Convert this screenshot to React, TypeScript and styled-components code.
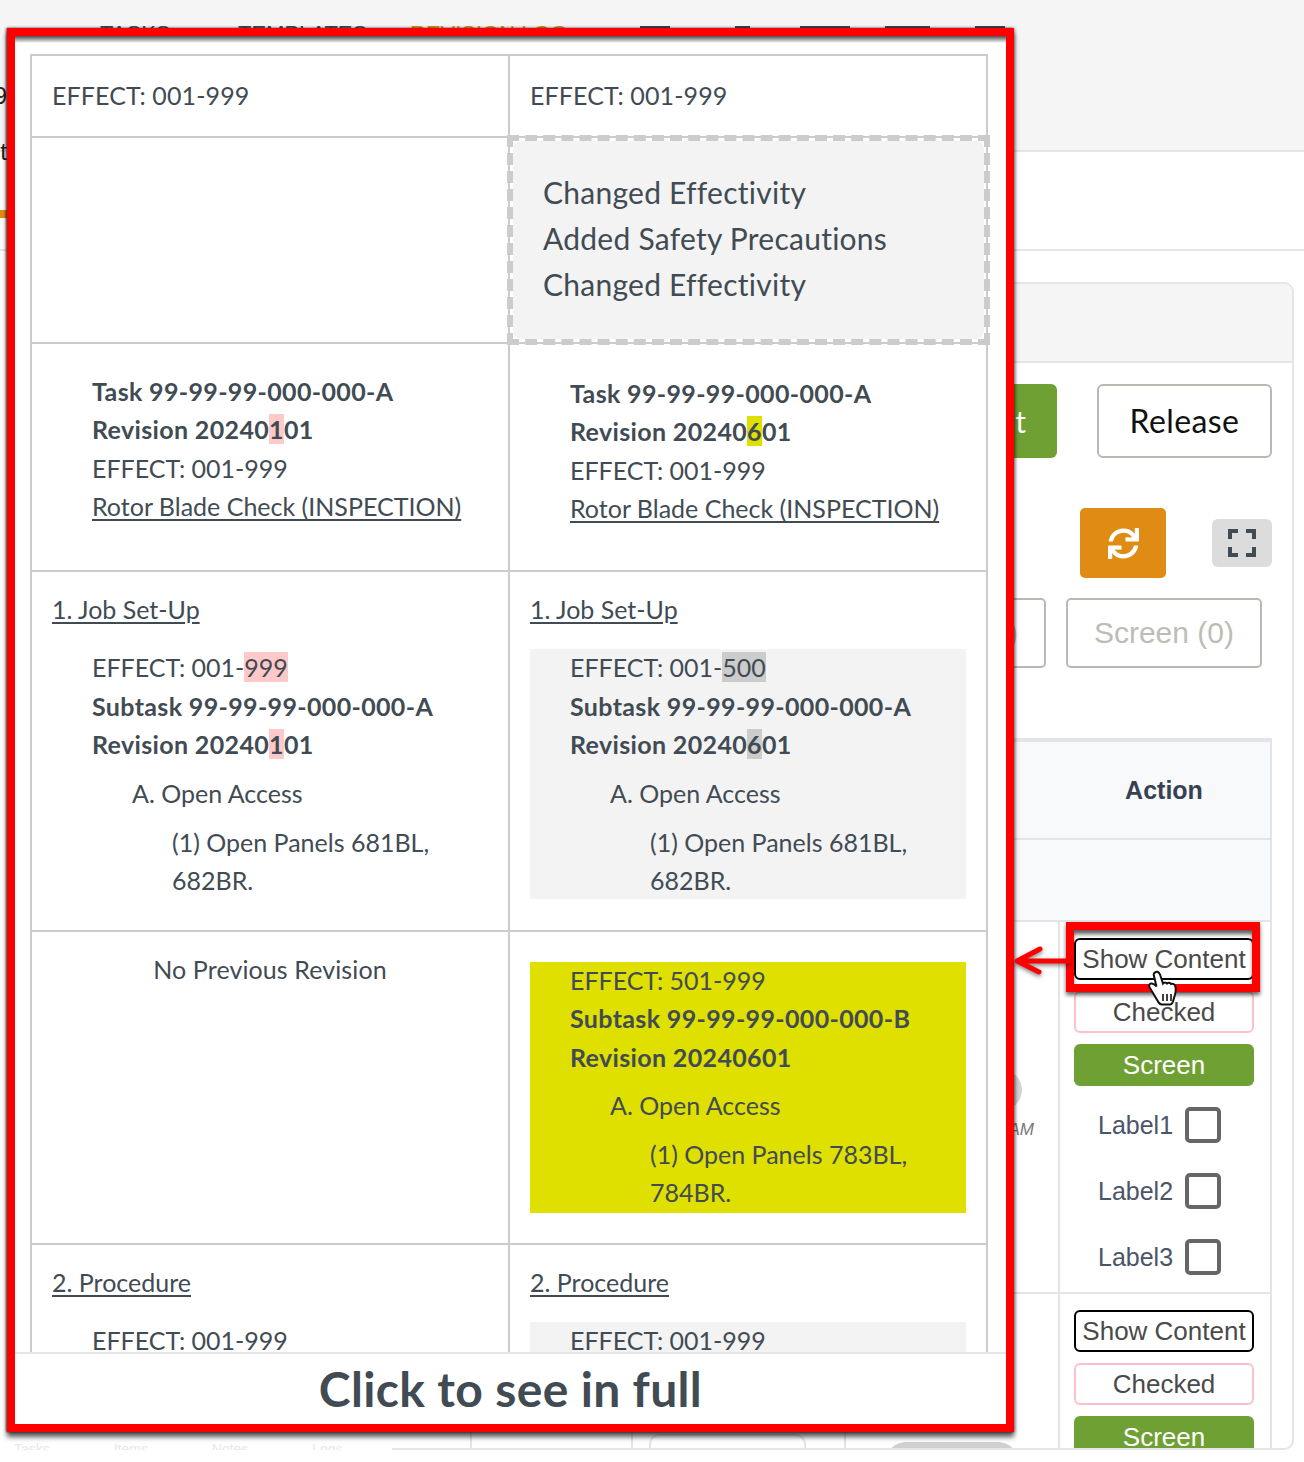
import React from 'react';
import styled, { createGlobalStyle } from 'styled-components';
import { FaSync } from 'react-icons/fa';

const Global = createGlobalStyle`
  html, body { margin: 0; padding: 0; background: #fff; }
  * { box-sizing: border-box; }
`;

const Page = styled.div`
  position: relative;
  width: 1304px;
  height: 1462px;
  overflow: hidden;
  background: #fff;
  font-family: "Liberation Sans", Arial, sans-serif;
`;

/* ---------- page underneath ---------- */
const TopBar = styled.header`
  height: 152px;
  background: #f5f5f5;
  border-bottom: 2px solid #e5e5e5;
  padding-top: 22px;
`;
const Nav = styled.nav`
  display: flex;
  align-items: flex-start;
  height: 29px;
  padding-left: 100px;
`;
const NavItem = styled.span<{ $w: number; $gap: number; $active?: boolean }>`
  width: ${p => p.$w}px;
  margin-right: ${p => p.$gap}px;
  font-size: 22px;
  line-height: 24px;
  white-space: nowrap;
  color: ${p => (p.$active ? '#e08c14' : '#414b53')};
`;
const NavIcon = styled.span<{ $w: number; $gap: number }>`
  width: ${p => p.$w}px;
  height: 8px;
  margin-top: 4px;
  margin-right: ${p => p.$gap}px;
  background: #414b53;
`;
const EdgeText = styled.div<{ $top: number }>`
  width: 7px;
  margin-top: ${p => p.$top}px;
  overflow: hidden;
  direction: rtl;
  white-space: nowrap;
  font-size: 24px;
  line-height: 26px;
  color: #222;
`;
const SubBar = styled.div`
  height: 99px;
  padding-top: 58px;
  border-bottom: 2px solid #e5e5e5;
`;
const OrangeTab = styled.div`
  width: 8px;
  height: 8px;
  background: #e08c14;
`;
const Main = styled.main`
  display: flex;
  padding-top: 31px;
`;
const Sidebar = styled.aside`
  width: 392px;
  height: 1168px;
  padding: 1160px 0 0 14px;
  font-size: 14px;
  line-height: 14px;
  color: #e8e8e8;
  word-spacing: 60px;
  white-space: nowrap;
  overflow: hidden;
`;
const Panel = styled.section`
  width: 902px;
  height: 1168px;
  border: solid #e5e5e5;
  border-width: 2px 2px 2px 0;
  border-radius: 0 10px 10px 0;
  overflow: hidden;
  background: #fff;
`;
const PanelHead = styled.div`
  height: 79px;
  background: #f5f5f5;
  border-bottom: 2px solid #e5e5e5;
`;
const ButtonRow = styled.div<{ $top: number; $right: number; $gap: number }>`
  display: flex;
  justify-content: flex-end;
  align-items: center;
  margin-top: ${p => p.$top}px;
  padding-right: ${p => p.$right}px;
  gap: ${p => p.$gap}px;
`;
const GreenAction = styled.div`
  width: 154px;
  height: 74px;
  border-radius: 6px;
  background: #6fa033;
  color: #fff;
  font: 30px/74px Lato, sans-serif;
  text-align: center;
`;
const ReleaseButton = styled.div`
  width: 175px;
  height: 74px;
  border: 2px solid #b9b9b3;
  border-radius: 6px;
  color: #111;
  font: 32px/70px Lato, sans-serif;
  letter-spacing: 0.4px;
  text-align: center;
`;
const RefreshButton = styled.div`
  width: 86px;
  height: 70px;
  border-radius: 5px;
  background: #e08c14;
  color: #fff;
  display: flex;
  align-items: center;
  justify-content: center;
`;
const FullButton = styled.div`
  width: 60px;
  height: 48px;
  border-radius: 6px;
  background: #dddcdd;
  display: flex;
  align-items: center;
  justify-content: center;
`;
const Chip = styled.div`
  height: 70px;
  padding: 0 26px;
  border: 2px solid #b9b9b3;
  border-radius: 5px;
  color: #bdbdb8;
  font-size: 30px;
  line-height: 66px;
  white-space: nowrap;
`;
const DataTable = styled.div`
  width: 860px;
  margin: 70px 0 0 20px;
  border-top: 4px solid #e2e4e8;
  border-right: 2px solid #e2e4e8;
`;
const HeadRow = styled.div<{ $h: number }>`
  display: flex;
  justify-content: flex-end;
  height: ${p => p.$h}px;
  background: #f8f9fb;
  border-bottom: 2px solid #e2e4e8;
`;
const ActionTitle = styled.div`
  width: 212px;
  text-align: center;
  font-size: 25px;
  font-weight: 700;
  line-height: 96px;
  color: #374151;
`;
const BodyRow = styled.div<{ $h: number }>`
  display: grid;
  grid-template-columns: 58px 161px 213px 214px 212px;
  height: ${p => p.$h}px;
  border-bottom: 2px solid #e2e4e8;
`;
const Cell = styled.div<{ $plain?: boolean }>`
  border-left: ${p => (p.$plain ? 'none' : '2px solid #e2e4e8')};
  min-width: 0;
`;
const RoundedBox = styled.div`
  height: 50px;
  margin: 140px 38px 0 16px;
  border: 2px solid #e2e4e8;
  border-radius: 10px;
`;
const Pill = styled.div`
  height: 40px;
  margin: 148px 40px 0 40px;
  border-radius: 20px 20px 0 0;
  background: #d0d0d0;
`;
const TimeCell = styled(Cell)`
  display: flex;
  flex-direction: column;
  align-items: flex-end;
  padding: 148px 24px 0 0;
`;
const Avatar = styled.div`
  width: 40px;
  height: 40px;
  margin-right: 12px;
  border-radius: 50%;
  background: #d4d4d4;
`;
const Time = styled.div`
  margin-top: 10px;
  font-size: 17px;
  line-height: 20px;
  font-style: italic;
  color: #777;
`;
const ActionCell = styled(Cell)`
  display: flex;
  flex-direction: column;
  align-items: center;
  gap: 11px;
  padding: 16px 2px 0 0;
`;
const SmallButton = styled.div<{ $kind: 'show' | 'checked' | 'screen' }>`
  flex: none;
  width: 180px;
  height: 42px;
  border-radius: 6px;
  border: 2px solid ${p => (p.$kind === 'show' ? '#000' : p.$kind === 'checked' ? '#ffc0cb' : '#6fa033')};
  background: ${p => (p.$kind === 'screen' ? '#6fa033' : '#fff')};
  color: ${p => (p.$kind === 'screen' ? '#fff' : '#4a4a4a')};
  font-size: 26px;
  line-height: 38px;
  text-align: center;
  white-space: nowrap;
`;
const CheckRows = styled.div`
  display: flex;
  flex-direction: column;
  gap: 30px;
  margin-top: 10px;
  width: 132px;
`;
const CheckRow = styled.label`
  display: flex;
  align-items: center;
  height: 36px;
  font-size: 25px;
  color: #4a5568;
`;
const CheckText = styled.span`
  width: 87px;
`;
const CheckBox = styled.span`
  width: 36px;
  height: 36px;
  border: 4px solid #666;
  border-radius: 5px;
`;

/* ---------- overlay with the comparison table ---------- */
const Modal = styled.div`
  position: absolute;
  left: 7px;
  top: 28px;
  width: 1007px;
  height: 1404px;
  border: 8px solid #f00;
  background: #fff;
  display: flex;
  flex-direction: column;
  box-shadow: 0 5px 5px rgba(0, 0, 0, 0.65), 1px 0 3px rgba(0, 0, 0, 0.3), -1px 0 2px rgba(0, 0, 0, 0.6);
  font-family: Lato, "Open Sans", sans-serif;
  color: #414b53;
`;
const TopShade = styled.div`
  position: absolute;
  left: 0;
  right: 0;
  top: 0;
  height: 7px;
  background: linear-gradient(rgba(0, 0, 0, 0.7), rgba(0, 0, 0, 0));
`;
const ModalBody = styled.div`
  flex: 1;
  min-height: 0;
  overflow: hidden;
  padding: 18px 0 0 15px;
`;
const Compare = styled.div`
  width: 958px;
  border: solid #ccc;
  border-width: 2px 2px 0 2px;
`;
const CompareRow = styled.div<{ $h: number; $line?: boolean }>`
  display: grid;
  grid-template-columns: 476px 478px;
  height: ${p => p.$h}px;
  border-bottom: ${p => (p.$line === false ? 'none' : '2px solid #ccc')};
`;
const CompareCell = styled.div<{ $divider?: boolean; $top?: number; $center?: boolean }>`
  position: relative;
  padding: ${p => p.$top ?? 0}px 20px 0 20px;
  border-left: ${p => (p.$divider ? '2px solid #ccc' : 'none')};
  font-size: 25px;
  line-height: 38.4px;
  letter-spacing: 0.1px;
  text-align: ${p => (p.$center ? 'center' : 'left')};
`;
const Notes = styled.div`
  position: absolute;
  left: -3px;
  right: -4px;
  top: -3px;
  bottom: -3px;
  border: 6px dashed #ccc;
  font-size: 30px;
  line-height: 46px;
  letter-spacing: 0.25px;
`;
const NotesInner = styled.div`
  height: 100%;
  padding: 28px 0 0 30px;
  border-radius: 8px;
  background: #f3f3f3;
`;
const Line = styled.div<{ $level?: number; $gap?: number; $bold?: boolean }>`
  padding-left: ${p => (p.$level ?? 0) * 40}px;
  margin-top: ${p => p.$gap ?? 0}px;
  font-weight: ${p => (p.$bold ? 700 : 400)};
  letter-spacing: ${p => (p.$bold ? 0.35 : 0)}px;
  white-space: nowrap;
`;
const LinkText = styled.span`
  text-decoration: underline;
  text-underline-offset: 3px;
`;
const Mark = styled.span<{ $c: string }>`
  background: ${p => p.$c};
`;
const Block = styled.div<{ $bg?: string; $top?: number; $h?: number; $pt?: number }>`
  display: flow-root;
  margin-top: ${p => p.$top ?? 0}px;
  height: ${p => (p.$h ? `${p.$h}px` : 'auto')};
  padding-top: ${p => p.$pt ?? 0}px;
  background: ${p => p.$bg ?? 'transparent'};
`;
const ModalFoot = styled.div`
  flex: none;
  height: 72px;
  border-top: 2px solid #e5e5e5;
  background: #fff;
  text-align: center;
  font-size: 48px;
  font-weight: 700;
  letter-spacing: 0.35px;
  line-height: 70px;
  color: #414b53;
`;

const Callout = styled.div`
  position: absolute;
  left: 1066px;
  top: 922px;
  width: 194px;
  height: 70px;
  border: 8px solid #f00;
  box-shadow: 0 3px 4px rgba(0, 0, 0, 0.6), inset 0 5px 4px -1px rgba(0, 0, 0, 0.65);
`;
const Arrow = styled.svg`
  position: absolute;
  left: 1012px;
  top: 944px;
  filter: drop-shadow(0 2px 2px rgba(0, 0, 0, 0.5));
`;
const Cursor = styled.svg`
  position: absolute;
  left: 1148px;
  top: 970px;
`;

const PINK = '#ffc9c9';
const GREY = '#ccc';
const YELLOW = '#dfdf00';

const TaskHead = ({ mark, color, top }: { mark: string; color: string; top: number }) => (
  <Block $pt={top}>
    <Line $level={1} $bold>Task 99-99-99-000-000-A</Line>
    <Line $level={1} $bold>Revision 20240<Mark $c={color}>{mark}</Mark>01</Line>
    <Line $level={1}>EFFECT: 001-999</Line>
    <Line $level={1}><LinkText>Rotor Blade Check (INSPECTION)</LinkText></Line>
  </Block>
);

const Subtask = ({ end, mark, color }: { end: string; mark: string; color: string }) => (
  <>
    <Line $level={1} $gap={-1}>EFFECT: 001-<Mark $c={color}>{end}</Mark></Line>
    <Line $level={1} $bold>Subtask 99-99-99-000-000-A</Line>
    <Line $level={1} $bold>Revision 20240<Mark $c={color}>{mark}</Mark>01</Line>
    <Line $level={2} $gap={10}>A. Open Access</Line>
    <Line $level={3} $gap={11}>(1) Open Panels 681BL,</Line>
    <Line $level={3}>682BR.</Line>
  </>
);

const Actions = () => (
  <>
    <SmallButton $kind="show">Show Content</SmallButton>
    <SmallButton $kind="checked">Checked</SmallButton>
    <SmallButton $kind="screen">Screen</SmallButton>
  </>
);

export default function App() {
  return (
    <Page>
      <Global />
      <TopBar>
        <Nav>
          <NavItem $w={68} $gap={70}>TASKS</NavItem>
          <NavItem $w={134} $gap={38}>TEMPLATES</NavItem>
          <NavItem $w={190} $gap={40} $active>REVISION LOG</NavItem>
          <NavIcon $w={30} $gap={65} />
          <NavIcon $w={15} $gap={50} />
          <NavIcon $w={50} $gap={35} />
          <NavIcon $w={45} $gap={45} />
          <NavIcon $w={30} $gap={0} />
        </Nav>
        <EdgeText $top={32}>Rev 9</EdgeText>
        <EdgeText $top={30}>Effect:</EdgeText>
      </TopBar>
      <SubBar>
        <OrangeTab />
      </SubBar>
      <Main>
        <Sidebar>Tasks Items Notes Logs Files</Sidebar>
        <Panel>
          <PanelHead />
          <ButtonRow $top={21} $right={20} $gap={40}>
            <GreenAction>Submit</GreenAction>
            <ReleaseButton>Release</ReleaseButton>
          </ButtonRow>
          <ButtonRow $top={50} $right={20} $gap={46}>
            <RefreshButton><FaSync size={31} /></RefreshButton>
            <FullButton>
              <svg width="28" height="28" viewBox="0 0 28 28" fill="none" stroke="#414b53" strokeWidth="4">
                <path d="M2 10V2h8M18 2h8v8M26 18v8h-8M10 26H2v-8" />
              </svg>
            </FullButton>
          </ButtonRow>
          <ButtonRow $top={20} $right={30} $gap={20}>
            <Chip>Checked (0)</Chip>
            <Chip>Screen (0)</Chip>
          </ButtonRow>
          <DataTable>
            <HeadRow $h={98}><ActionTitle>Action</ActionTitle></HeadRow>
            <HeadRow $h={82} />
            <BodyRow $h={372}>
              <Cell $plain />
              <Cell />
              <Cell />
              <TimeCell>
                <Avatar />
                <Time>10:30 AM</Time>
              </TimeCell>
              <ActionCell>
                <Actions />
                <CheckRows>
                  <CheckRow><CheckText>Label1</CheckText><CheckBox /></CheckRow>
                  <CheckRow><CheckText>Label2</CheckText><CheckBox /></CheckRow>
                  <CheckRow><CheckText>Label3</CheckText><CheckBox /></CheckRow>
                </CheckRows>
              </ActionCell>
            </BodyRow>
            <BodyRow $h={372}>
              <Cell $plain />
              <Cell />
              <Cell><RoundedBox /></Cell>
              <Cell><Pill /></Cell>
              <ActionCell>
                <Actions />
              </ActionCell>
            </BodyRow>
          </DataTable>
        </Panel>
      </Main>

      <Modal>
        <TopShade />
        <ModalBody>
          <Compare>
            <CompareRow $h={82}>
              <CompareCell $top={20}>EFFECT: 001-999</CompareCell>
              <CompareCell $divider $top={20}>EFFECT: 001-999</CompareCell>
            </CompareRow>
            <CompareRow $h={206}>
              <CompareCell />
              <CompareCell $divider>
                <Notes>
                  <NotesInner>
                    <div>Changed Effectivity</div>
                    <div>Added Safety Precautions</div>
                    <div>Changed Effectivity</div>
                  </NotesInner>
                </Notes>
              </CompareCell>
            </CompareRow>
            <CompareRow $h={228}>
              <CompareCell><TaskHead mark="1" color={PINK} top={28} /></CompareCell>
              <CompareCell $divider><TaskHead mark="6" color={YELLOW} top={30} /></CompareCell>
            </CompareRow>
            <CompareRow $h={360}>
              <CompareCell $top={18}>
                <Line><LinkText>1. Job Set-Up</LinkText></Line>
                <Block $top={21}>
                  <Subtask end="999" mark="1" color={PINK} />
                </Block>
              </CompareCell>
              <CompareCell $divider $top={18}>
                <Line><LinkText>1. Job Set-Up</LinkText></Line>
                <Block $top={21} $bg="#f3f3f3" $h={250}>
                  <Subtask end="500" mark="6" color={GREY} />
                </Block>
              </CompareCell>
            </CompareRow>
            <CompareRow $h={313}>
              <CompareCell $center $top={18}>No Previous Revision</CompareCell>
              <CompareCell $divider $top={30}>
                <Block $bg={YELLOW} $h={251}>
                  <Line $level={1} $gap={-1}>EFFECT: 501-999</Line>
                  <Line $level={1} $bold>Subtask 99-99-99-000-000-B</Line>
                  <Line $level={1} $bold>Revision 20240601</Line>
                  <Line $level={2} $gap={10}>A. Open Access</Line>
                  <Line $level={3} $gap={10}>(1) Open Panels 783BL,</Line>
                  <Line $level={3}>784BR.</Line>
                </Block>
              </CompareCell>
            </CompareRow>
            <CompareRow $h={200} $line={false}>
              <CompareCell $top={18}>
                <Line><LinkText>2. Procedure</LinkText></Line>
                <Block $top={21}><Line $level={1} $gap={-1}>EFFECT: 001-999</Line></Block>
              </CompareCell>
              <CompareCell $divider $top={18}>
                <Line><LinkText>2. Procedure</LinkText></Line>
                <Block $top={21} $bg="#f3f3f3" $h={120}><Line $level={1} $gap={-1}>EFFECT: 001-999</Line></Block>
              </CompareCell>
            </CompareRow>
          </Compare>
        </ModalBody>
        <ModalFoot>Click to see in full</ModalFoot>
      </Modal>

      <Callout />
      <Arrow width="58" height="36" viewBox="0 0 58 36" fill="none" stroke="#f00" strokeWidth="5" strokeLinecap="round" strokeLinejoin="round">
        <path d="M56 17H6M28 5 5 17l22 11" />
      </Arrow>
      <Cursor width="34" height="36" viewBox="0 0 34 36">
        <path
          d="M7 2.500c2-1.500 4-.5 5 2l3 9c1-1.500 3-1.500 4 0 1-1 3-1 4 .5 1.500-.5 3 0 4 1.500 1 2 1 5 0 9l-2 7c-.5 1.500-1.500 3-3 3H14c-2 0-3-1-4-3L2 18c-1.500-2-1-4 1-4.500 2-.5 4 1 5.500 3L6 6c-.5-1.500 0-3 1-3.500z"
          fill="#fff"
          stroke="#111"
          strokeWidth="2"
        />
        <path d="M15 24v7M19 24v7M23 24v7" stroke="#111" strokeWidth="1.600" />
      </Cursor>
    </Page>
  );
}
